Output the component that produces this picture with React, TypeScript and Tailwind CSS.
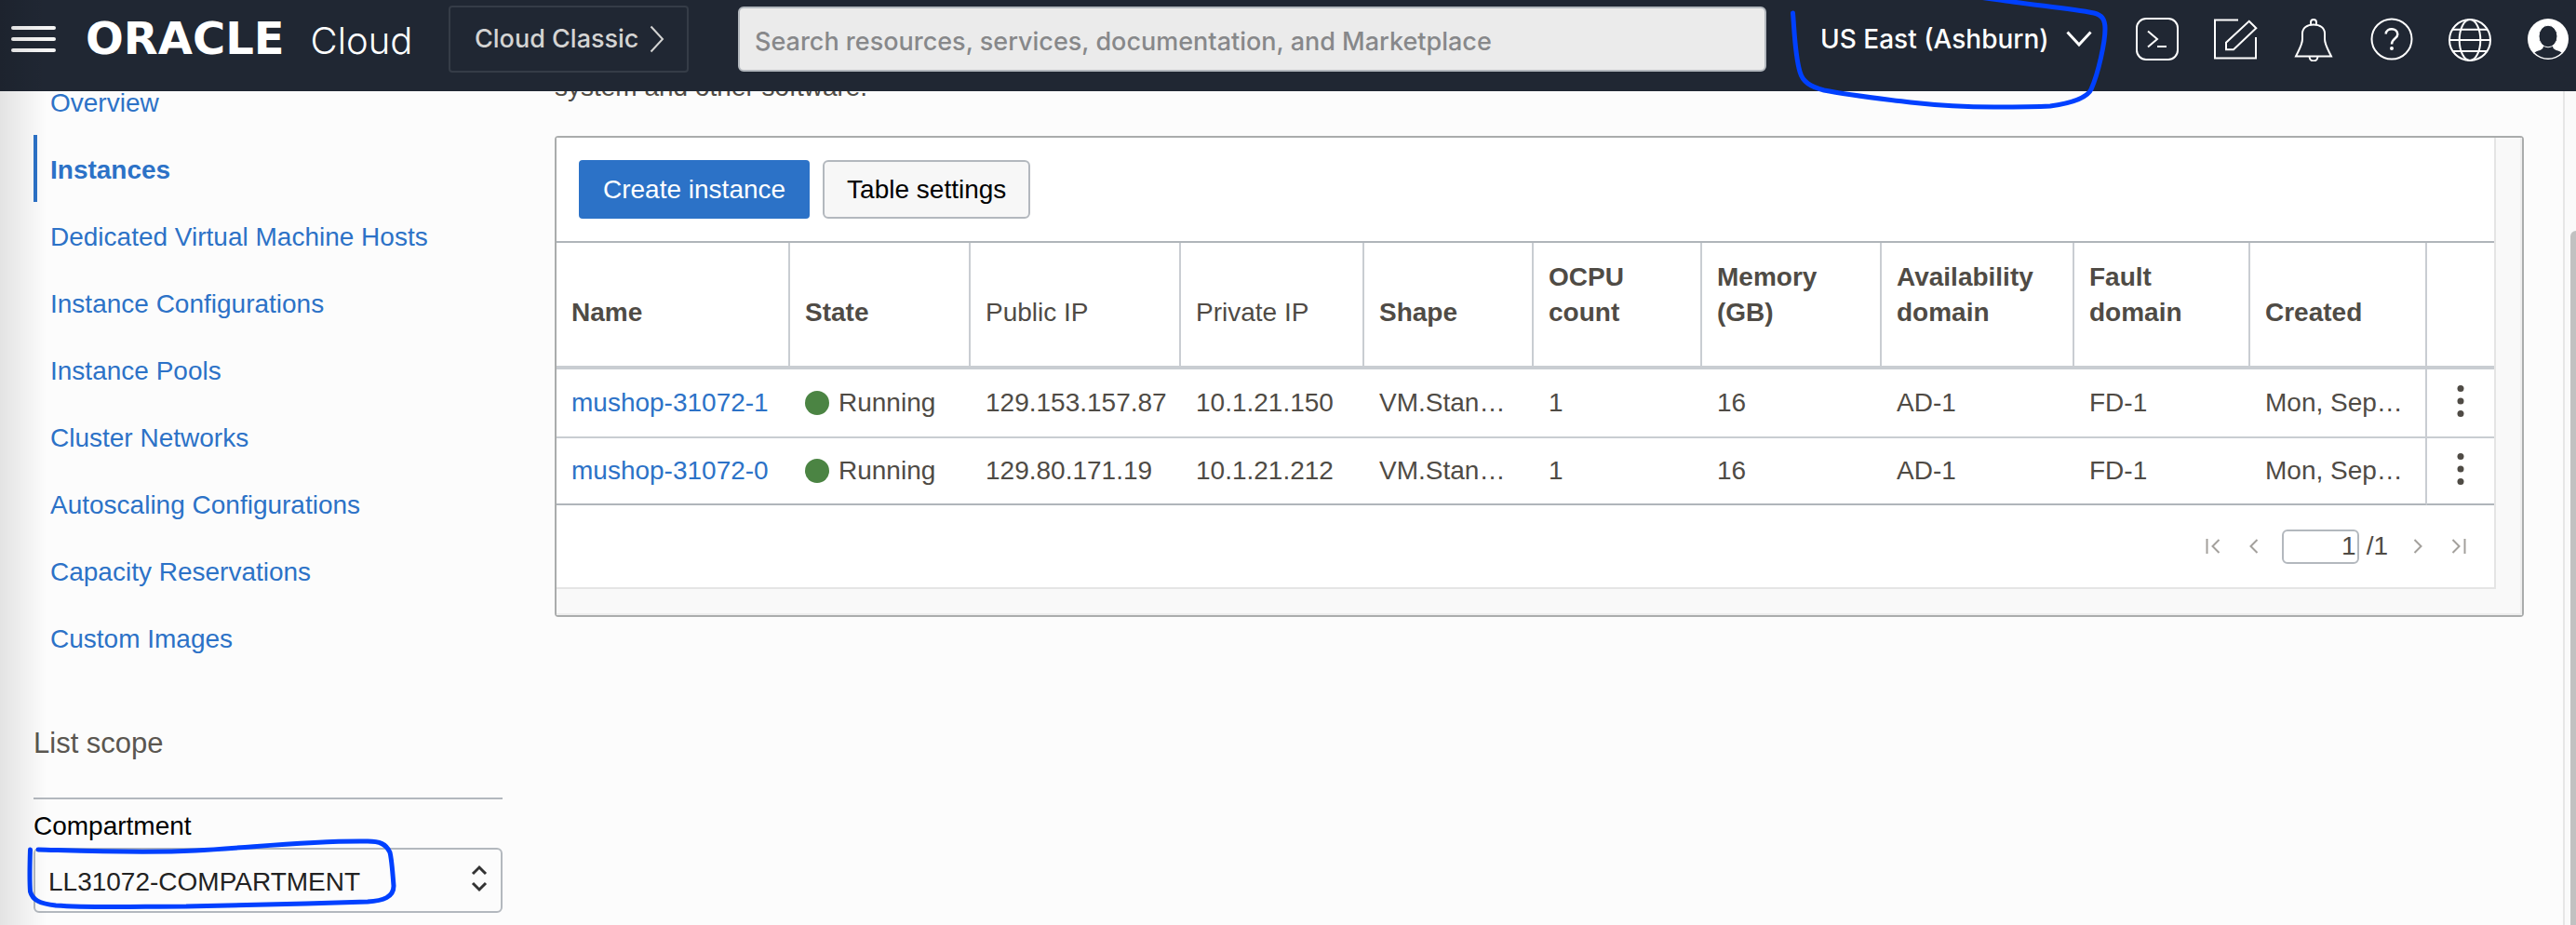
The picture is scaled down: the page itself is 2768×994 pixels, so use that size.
import React from "react";

const NAV_ITEMS = [
  "Overview",
  "Instances",
  "Dedicated Virtual Machine Hosts",
  "Instance Configurations",
  "Instance Pools",
  "Cluster Networks",
  "Autoscaling Configurations",
  "Capacity Reservations",
  "Custom Images",
];

const COLUMNS = [
  { label: "Name", width: "w-[251px]", bold: true },
  { label: "State", width: "w-[194px]", bold: true },
  { label: "Public IP", width: "w-[226px]", bold: false },
  { label: "Private IP", width: "w-[197px]", bold: false },
  { label: "Shape", width: "w-[182px]", bold: true },
  { label: "OCPU count", width: "w-[181px]", bold: true },
  { label: "Memory (GB)", width: "w-[193px]", bold: true },
  { label: "Availability domain", width: "w-[207px]", bold: true },
  { label: "Fault domain", width: "w-[189px]", bold: true },
  { label: "Created", width: "w-[190px]", bold: true },
];

const INSTANCES = [
  {
    name: "mushop-31072-1",
    state: "Running",
    cells: ["129.153.157.87", "10.1.21.150", "VM.Stan…", "1", "16", "AD-1", "FD-1", "Mon, Sep…"],
  },
  {
    name: "mushop-31072-0",
    state: "Running",
    cells: ["129.80.171.19", "10.1.21.212", "VM.Stan…", "1", "16", "AD-1", "FD-1", "Mon, Sep…"],
  },
];

function IconButton({ label, children }: { label: string; children: React.ReactNode }) {
  return (
    <button type="button" aria-label={label} className="size-12 shrink-0 text-white">
      <svg viewBox="0 0 48 48" className="size-12" fill="none" stroke="currentColor" strokeWidth="2">
        {children}
      </svg>
    </button>
  );
}

function PagerButton({ label, d, className }: { label: string; d: string; className: string }) {
  return (
    <button type="button" aria-label={label} className={className}>
      <svg viewBox="0 0 16 18" className="h-[18px] w-4" fill="none" stroke="#a3a09c" strokeWidth="2">
        <path d={d} />
      </svg>
    </button>
  );
}

function Header() {
  return (
    <header className="relative z-10 flex h-[98px] shrink-0 items-center bg-[#202733] pr-[6px] pb-[14px] pl-3 font-['Inter',sans-serif]">
      <button type="button" aria-label="Navigation menu" className="flex w-12 shrink-0 flex-col gap-2">
        <span className="h-1 rounded-xs bg-[#f5f5f5]" />
        <span className="h-1 rounded-xs bg-[#f5f5f5]" />
        <span className="h-1 rounded-xs bg-[#f5f5f5]" />
      </button>

      <a href="#home" className="ml-8 flex w-[390px] shrink-0 items-baseline gap-7 whitespace-nowrap text-white">
        <span className="font-['DejaVu_Sans',sans-serif] text-[48px] leading-[56px] font-bold">ORACLE</span>
        <span className="text-[40px] leading-[56px] font-light">Cloud</span>
      </a>

      <button
        type="button"
        className="flex h-[72px] w-[258px] shrink-0 items-center gap-3 rounded border-2 border-[#353c47] pl-[26px] text-[27px] font-medium whitespace-nowrap text-[#d4d4d3]"
      >
        Cloud Classic
        <svg viewBox="0 0 16 30" className="h-[30px] w-4 shrink-0" fill="none" stroke="currentColor" strokeWidth="2">
          <path d="M1.500 1.500L14 15L1.500 28.500" />
        </svg>
      </button>

      <input
        type="search"
        aria-label="Search"
        placeholder="Search resources, services, documentation, and Marketplace"
        className="ml-[53px] h-[70px] min-w-0 flex-1 rounded-md border-2 border-[#b3b8be] bg-[#ebebeb] px-4 pt-1 text-[27px] font-medium text-[#333333] placeholder:text-[#87888a]"
      />

      <div className="relative mr-[46px] ml-[58px] flex shrink-0">
        <button type="button" className="flex w-[292px] items-center justify-between text-[28px] font-medium whitespace-nowrap text-white">
          US East (Ashburn)
          <svg viewBox="0 0 28 18" className="h-[18px] w-7 shrink-0" fill="none" stroke="currentColor" strokeWidth="3">
            <path d="M1.500 1.500L14 15L26.500 1.500" />
          </svg>
        </button>
        <svg
          viewBox="1916 0 356 124"
          className="pointer-events-none absolute -top-6 -left-10 h-[124px] w-[356px] overflow-visible"
          fill="none"
          stroke="#0040ff"
          strokeWidth="5"
          strokeLinecap="round"
          strokeLinejoin="round"
        >
          <path d="M1926.500 14C1928 30 1928.500 58 1934 77C1937 88 1945 93 1960 97C1985 102 2020 106 2053 110C2080 113 2110 115 2143 115C2165 115 2185 115 2203 114C2225 111 2243 105 2247 96C2255 78 2262 45 2262 31C2262 20 2258 16 2250 14C2225 9 2190 6 2163 2C2150 0 2140 -1 2120 -4" />
        </svg>
      </div>

      <div className="flex shrink-0 gap-9">
        <IconButton label="Developer tools">
          <rect x="2" y="2" width="44" height="44" rx="10" />
          <path d="M14 15.500L24 24L14 32.500M24 32H34" />
        </IconButton>
        <IconButton label="Feedback">
          <path d="M27 3.500H2V44.500H46V22" />
          <path d="M38.700 4.800L46.300 12.300L22 35.300H14V27.700Z" />
        </IconButton>
        <IconButton label="Announcements">
          <path d="M21 8.500V6A3 3 0 0 1 27 6V8.500" />
          <path d="M5 42.500H43C40 36 36 30 36 24V18C36 12 31 8.500 24 8.500C17 8.500 12 12 12 18V24C12 30 8 36 5 42.500Z" />
          <path d="M19.500 43C20 49 28 49 28.500 43" />
        </IconButton>
        <IconButton label="Help">
          <circle cx="24" cy="24" r="21.500" />
          <path d="M17.700 18.500C18 11.500 30.300 11.500 30.300 19C30.300 23.500 24 23 24 29.500" strokeWidth="2.500" />
          <circle cx="24" cy="34" r="2" fill="currentColor" stroke="none" />
        </IconButton>
        <IconButton label="Language">
          <circle cx="24" cy="25" r="22" />
          <ellipse cx="24" cy="25" rx="11.300" ry="22" />
          <path d="M5 13.700H43M2 25H46M5 37H43" />
        </IconButton>
        <IconButton label="Profile">
          <circle cx="24" cy="24" r="22" fill="currentColor" stroke="none" />
          <path
            d="M9.500 38.500C12 36.500 15 36.500 17 35C18.500 34 19 33 19 31H29C29 33 29.500 34 31 35C33 36.500 36 36.500 38.500 38.500A20.500 20.500 0 0 1 9.500 38.500Z"
            fill="#202733"
            stroke="none"
          />
          <ellipse cx="24" cy="21" rx="10" ry="11.800" fill="#202733" strokeWidth="1" />
        </IconButton>
      </div>
    </header>
  );
}

function Sidebar() {
  return (
    <aside className="w-[596px] shrink-0 pl-9">
      <nav className="-mt-[25px]">
        <ul>
          {NAV_ITEMS.map((item) => (
            <li key={item}>
              <a
                href="#nav"
                className={
                  item === "Instances"
                    ? "flex h-[72px] items-center border-l-4 border-[#2c72c7] pt-1 pl-[14px] font-bold text-[#2c72c7]"
                    : "flex h-[72px] items-center border-l-4 border-transparent pt-1 pl-[14px] text-[#2c72c7]"
                }
              >
                {item}
              </a>
            </li>
          ))}
        </ul>
      </nav>
      <div className="w-[504px]">
        <h2 className="mt-[58px] border-b-2 border-[#b3b8be] pb-[38px] text-[31px] leading-10 text-[#5a5650]">
          List scope
        </h2>
        <label htmlFor="compartment" className="mt-[11px] mb-[5px] block leading-9 text-black">
          Compartment
        </label>
        <div className="relative">
          <select
            id="compartment"
            className="block h-[70px] w-full appearance-none rounded-md border-2 border-[#b3b8be] bg-transparent pt-1 pl-[14px] text-[#222222]"
          >
            <option>LL31072-COMPARTMENT</option>
          </select>
          <svg
            viewBox="0 0 18 30"
            className="pointer-events-none absolute top-[18px] right-4 h-[30px] w-[18px]"
            fill="none"
            stroke="#333333"
            strokeWidth="3"
          >
            <path d="M2 10L9 3L16 10M2 20L9 27L16 20" />
          </svg>
          <svg
            viewBox="26 898 406 86"
            className="pointer-events-none absolute -top-[14px] -left-[10px] h-[86px] w-[406px]"
            fill="none"
            stroke="#0040ff"
            strokeWidth="5"
            strokeLinecap="round"
            strokeLinejoin="round"
          >
            <path d="M32.500 914C32 930 31.500 945 32.500 959C35 968 42 972 60 974C100 977 150 975 200 975C260 974 330 972 395 970C412 969 423 965 423 953C422 940 421 925 419 917C415 908 408 905 395 905C330 904 270 912 210 915C150 918 80 915 41 914" />
          </svg>
        </div>
      </div>
    </aside>
  );
}

function InstancesTable() {
  return (
    <table className="w-full table-fixed border-separate border-spacing-0 border-t-2 border-[#b0b5ba] text-left text-[#4f4b45]">
      <thead>
        <tr>
          {COLUMNS.map((column) => (
            <th
              key={column.label}
              scope="col"
              className={`${column.width} ${column.bold ? "font-bold" : "font-normal"} h-[136px] border-r-2 border-b-4 border-r-[#c9cdd2] border-b-[#c9cdd2] pr-4 pb-[38px] pl-4 align-bottom leading-[38px]`}
            >
              {column.label}
            </th>
          ))}
          <td className="w-[72px] border-b-4 border-[#c9cdd2]" />
        </tr>
      </thead>
      <tbody>
        {INSTANCES.map((instance, index) => {
          const line =
            index === INSTANCES.length - 1
              ? "h-[72px] border-b-2 border-b-[#b0b5ba]"
              : "h-[74px] border-b-2 border-b-[#c9cdd2]";
          return (
            <tr key={instance.name} className="whitespace-nowrap">
              <td className={`${line} pl-4`}>
                <a href="#instance" className="text-[#2c72c7]">
                  {instance.name}
                </a>
              </td>
              <td className={`${line} pl-4`}>
                <span className="flex items-center gap-[10px]">
                  <span className="size-[26px] rounded-full bg-[#4b8443]" />
                  {instance.state}
                </span>
              </td>
              {instance.cells.map((cell, cellIndex) => (
                <td
                  key={cellIndex}
                  className={
                    cellIndex === instance.cells.length - 1
                      ? `${line} border-r-2 border-r-[#c9cdd2] pl-4`
                      : `${line} pl-4`
                  }
                >
                  {cell}
                </td>
              ))}
              <td className={line}>
                <button type="button" aria-label="Actions" className="flex h-12 w-full items-center justify-center pb-1">
                  <svg viewBox="0 0 8 36" className="h-9 w-2" fill="#4f4b45">
                    <circle cx="4" cy="4.500" r="3.500" />
                    <circle cx="4" cy="18" r="3.500" />
                    <circle cx="4" cy="31.500" r="3.500" />
                  </svg>
                </button>
              </td>
            </tr>
          );
        })}
      </tbody>
    </table>
  );
}

export default function App() {
  return (
    <div className="relative flex h-screen flex-col overflow-hidden bg-[#fcfcfc] font-['Liberation_Sans',Arial,sans-serif] text-[28px] leading-9">
      <Header />
      <main className="flex min-h-0 flex-1">
        <Sidebar />
        <section className="min-w-0 flex-1">
          <p className="-mt-6 mb-8 leading-10 text-[#4f4b45]">system and other software.</p>
          <div className="mr-[42px] rounded-sm border-2 border-[#aaacac] bg-[#f9f9f9]">
            <div className="border-r-2 border-b-2 border-[#eeeeee] pr-[26px] pb-[26px]">
              <div className="border-r-2 border-b-2 border-[#e5e5e5] bg-white">
                <div className="flex gap-[14px] p-6">
                  <button type="button" className="h-[63px] rounded bg-[#2c72c7] px-[26px] text-white">
                    Create instance
                  </button>
                  <button
                    type="button"
                    className="h-[63px] rounded-md border-2 border-[#b3b8be] bg-[#f7f7f7] px-6 text-black"
                  >
                    Table settings
                  </button>
                </div>
                <InstancesTable />
                <div className="flex h-[88px] items-center justify-end pr-[30px] text-[#4f4b45]">
                  <PagerButton label="First page" d="M1.500 1V17M14.500 2L7.500 9L14.500 16" className="mr-7" />
                  <PagerButton label="Previous page" d="M11.500 2L4.500 9L11.500 16" className="mr-[22px]" />
                  <input
                    aria-label="Page"
                    defaultValue="1"
                    className="mr-2 h-[37px] w-[83px] rounded-md border-2 border-[#b3b8be] bg-white pr-px text-right"
                  />
                  <span>/1</span>
                  <PagerButton label="Next page" d="M4.500 2L11.500 9L4.500 16" className="mr-7 ml-6" />
                  <PagerButton label="Last page" d="M1.500 2L8.500 9L1.500 16M14.500 1V17" className="" />
                </div>
              </div>
            </div>
          </div>
        </section>
        <div className="flex w-[14px] shrink-0 justify-end border-l-2 border-[#e6e6e6] bg-[#fafafa] pt-[150px]">
          <div className="w-[6px] rounded-tl-md bg-[#c1c1c1]" />
        </div>
      </main>
      <div className="pointer-events-none absolute inset-y-0 left-0 z-20 w-[50px] bg-linear-to-r from-black/10 to-transparent" />
    </div>
  );
}
